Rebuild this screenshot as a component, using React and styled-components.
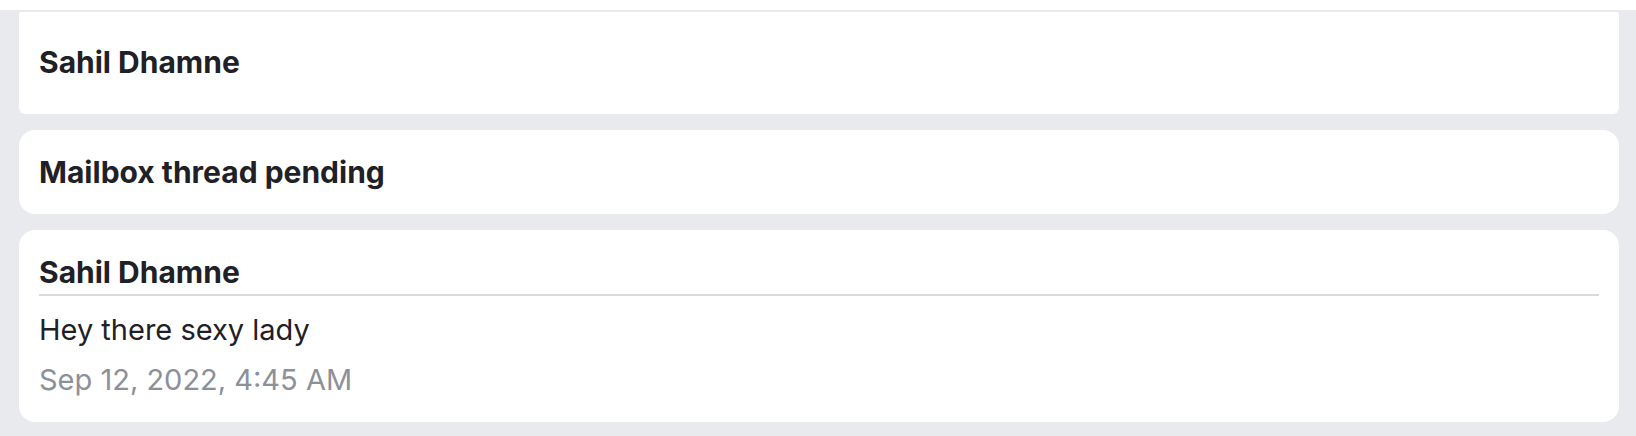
import styled, { createGlobalStyle } from "styled-components";

const GlobalStyle = createGlobalStyle`
  * {
    box-sizing: border-box;
  }
  body {
    margin: 0;
    background: #e9eaed;
    font-family: Inter, "Noto Sans", "Liberation Sans", sans-serif;
    color: #1f2126;
  }
`;

const messages = [
  {
    id: 1,
    author: "Sahil Dhamne",
    body: "Hey there sexy lady",
    date: "Sep 12, 2022, 4:45 AM",
  },
];

const App = () => {
  return (
    <>
      <GlobalStyle />
      <Page>
        <TopBar />
        <List>
          <HeaderCard>
            <Title>Sahil Dhamne</Title>
          </HeaderCard>
          <Card>
            <Title>Mailbox thread pending</Title>
          </Card>
          {messages.map((m) => (
            <MessageCard key={m.id}>
              <Author>{m.author}</Author>
              <Body>{m.body}</Body>
              <Stamp>{m.date}</Stamp>
            </MessageCard>
          ))}
        </List>
      </Page>
    </>
  );
};

const Page = styled.div`
  width: 1636px;
  height: 436px;
  overflow: hidden;
`;

const TopBar = styled.div`
  height: 10px;
  background: #ffffff;
`;

const List = styled.div`
  display: flex;
  flex-direction: column;
  gap: 16px;
  padding: 2px 17px 14px 19px;
`;

const Card = styled.section`
  background: #ffffff;
  border-radius: 16px;
  padding: 20px;
`;

const HeaderCard = styled(Card)`
  border-radius: 2px 2px 6px 6px;
  padding: 28px 20px 30px;
`;

const MessageCard = styled(Card)`
  padding-bottom: 22px;
`;

const Title = styled.h4`
  margin: 0;
  font-size: 30px;
  line-height: 44px;
  font-weight: 700;
`;

const Author = styled(Title)`
  border-bottom: 2px solid #d9dade;
`;

const Body = styled.p`
  margin: 14px 0 0;
  font-size: 29px;
  line-height: 40px;
`;

const Stamp = styled.p`
  margin: 10px 0 0;
  font-size: 29px;
  line-height: 40px;
  color: #8c9099;
`;

export default App;
